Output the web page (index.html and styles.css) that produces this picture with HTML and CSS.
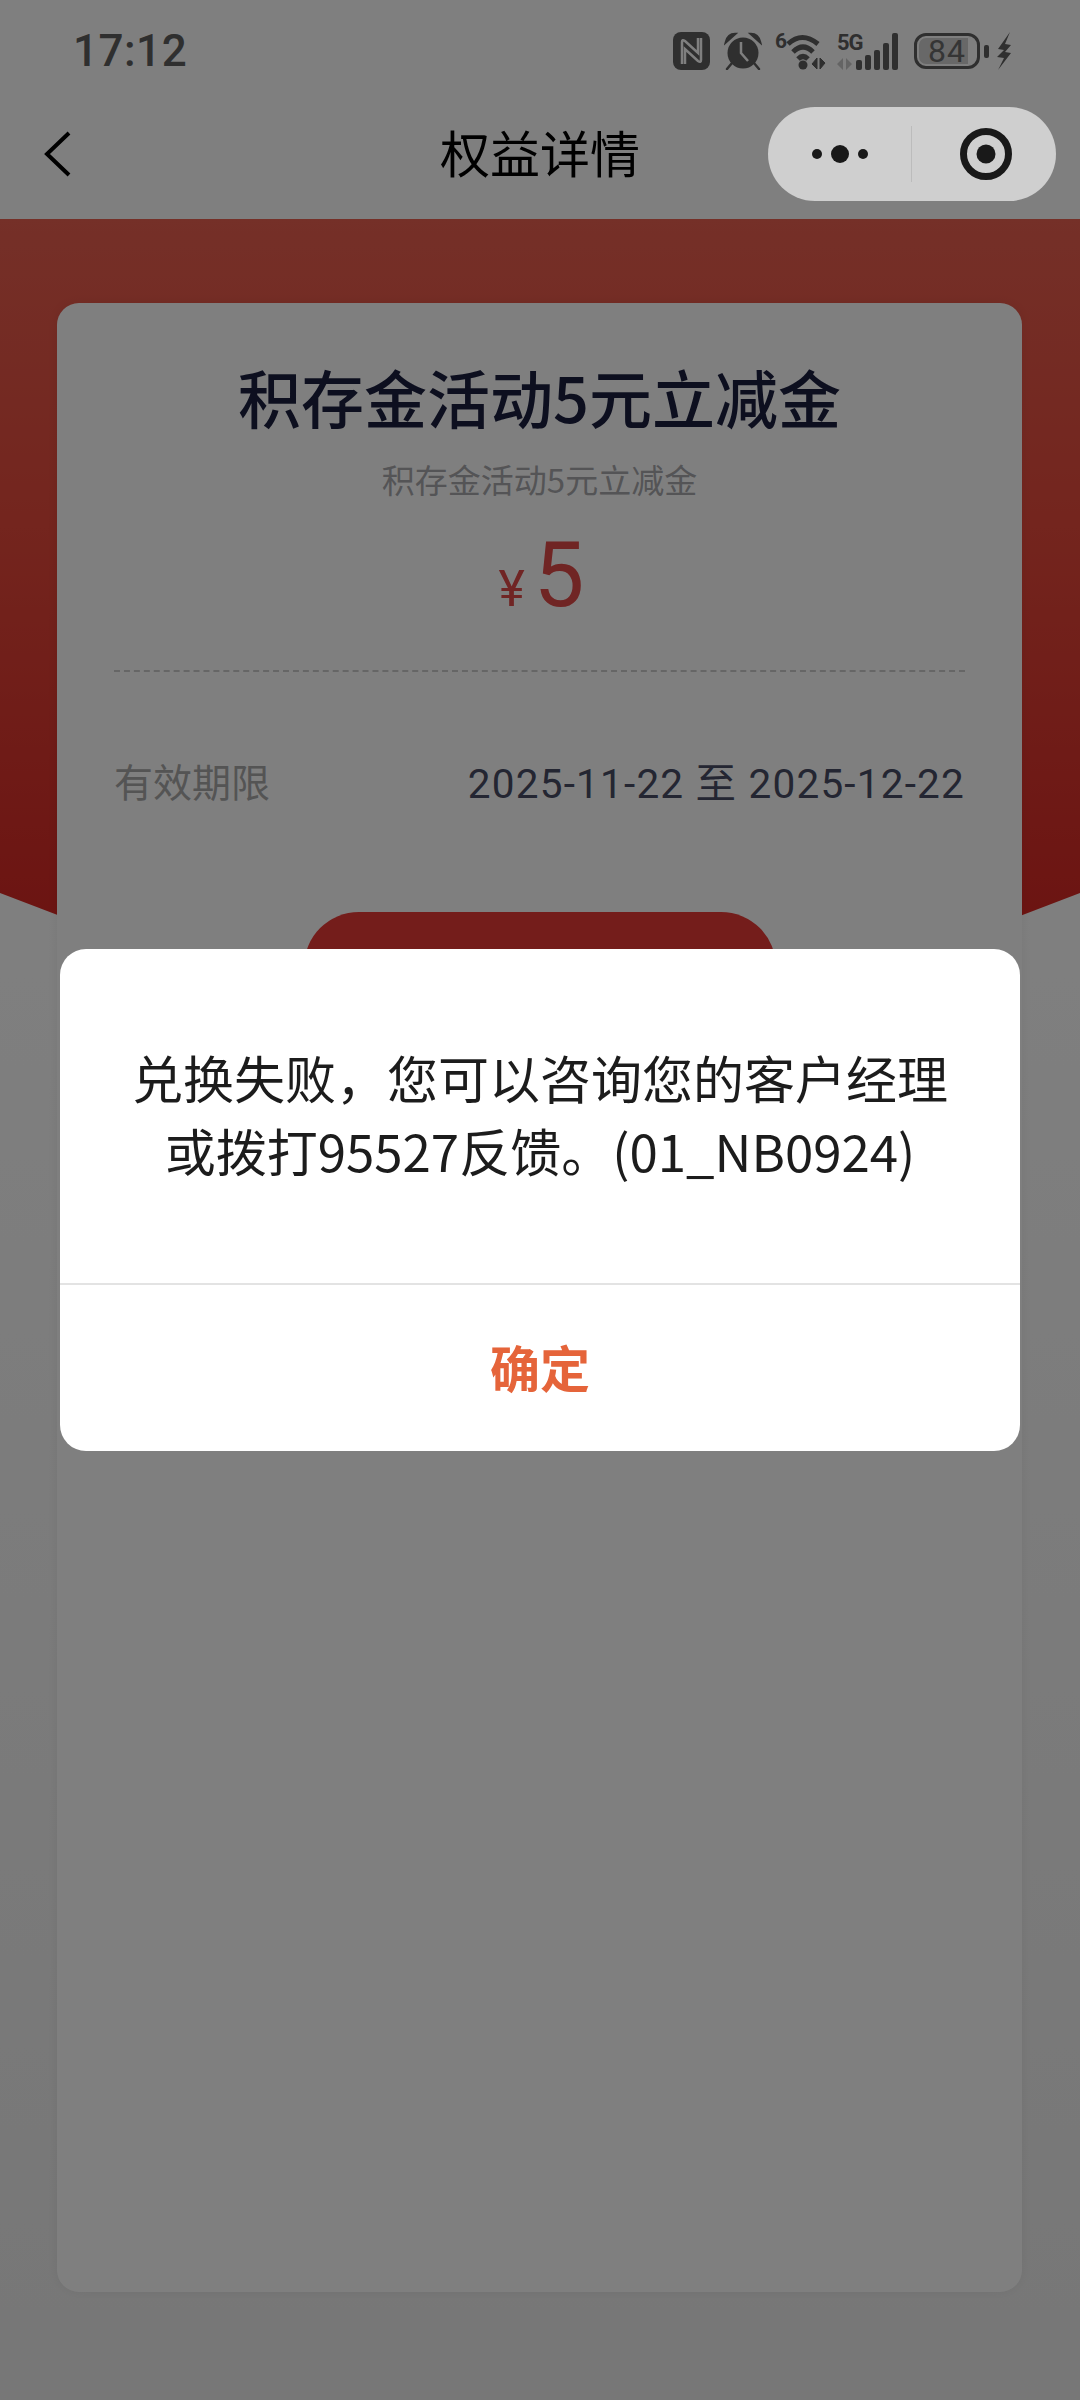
FILE: index.html
```html
<!DOCTYPE html>
<html>
<head>
    <meta charset="utf-8">
    <title>权益详情</title>
    <link rel="stylesheet" href="styles.css">
</head>
<body>
    <div class="page">
        <div class="top-bar">
            <div class="status-bar">
                <span class="status-time">17:12</span>
                <div class="status-icons">
                    <svg class="icon-nfc" width="37" height="38" viewBox="0 0 37 38">
                        <rect width="37" height="38" rx="8" fill="#5e5e5e"/>
                        <path d="M9 32V10q0-3 3-1l13 12V6M28 6v22q0 3-3 1L12 17v15" fill="none" stroke="#fff" stroke-width="2.500"/>
                    </svg>
                    <svg class="icon-alarm" width="38" height="38" viewBox="0 0 38 38">
                        <circle cx="19" cy="21" r="15.500" fill="#5e5e5e"/>
                        <path d="M2 10Q4 2 11 2ZM36 10Q34 2 27 2ZM8 31l-5 6M30 31l5 6" fill="#5e5e5e" stroke="#5e5e5e" stroke-width="2.500" stroke-linecap="round"/>
                        <path d="M17 10v11l7 8" fill="none" stroke="#fff" stroke-width="2.500"/>
                    </svg>
                    <div class="wifi">
                        <span class="wifi-gen">6</span>
                        <svg width="42" height="38" viewBox="0 0 42 38">
                            <path d="M2 12Q16-1 32 12M7 20Q17 10 27 20M12 27Q17 22 22 27" fill="none" stroke="#5e5e5e" stroke-width="5"/>
                            <circle cx="17" cy="33" r="4.500" fill="#5e5e5e"/>
                            <path d="M31 26v11l-5-5ZM34 37V26l5 5Z" fill="#5e5e5e" stroke="#5e5e5e"/>
                        </svg>
                    </div>
                    <div class="signal">
                        <div class="signal-left">
                            <span class="signal-gen">5G</span>
                            <svg width="15" height="12" viewBox="0 0 15 12">
                                <path d="M6 0v12L0 6ZM9 12V0l6 6Z" fill="#c8c8c8"/>
                            </svg>
                        </div>
                        <div class="signal-bars">
                            <i class="bar bar-1"></i>
                            <i class="bar bar-2"></i>
                            <i class="bar bar-3"></i>
                            <i class="bar bar-4"></i>
                            <i class="bar bar-5"></i>
                        </div>
                    </div>
                    <div class="battery">
                        <div class="battery-body">
                            <div class="battery-level"></div>
                            <span class="battery-text">84</span>
                        </div>
                        <i class="battery-cap"></i>
                    </div>
                    <svg class="icon-bolt" width="16" height="38" viewBox="0 0 16 38">
                        <path d="M14 0 2 17l6 1-7 7 7 1-6 12L15 21l-6-1 6-7-6-1Z" fill="#5e5e5e"/>
                    </svg>
                </div>
            </div>
            <div class="nav-bar">
                <svg class="nav-back" width="28" height="48" viewBox="0 0 28 48">
                    <path d="M25 3 3 24l22 21" fill="none" stroke="#000" stroke-width="4"/>
                </svg>
                <div class="nav-title">权益详情</div>
                <div class="capsule">
                    <div class="capsule-more">
                        <i class="dot"></i>
                        <i class="dot dot-big"></i>
                        <i class="dot"></i>
                    </div>
                    <i class="capsule-line"></i>
                    <div class="capsule-close">
                        <svg width="52" height="52" viewBox="0 0 52 52">
                            <circle cx="26" cy="26" r="22.500" fill="none" stroke="#191919" stroke-width="7"/>
                            <circle cx="26" cy="26" r="9.500" fill="#191919"/>
                        </svg>
                    </div>
                </div>
            </div>
        </div>

        <div class="hero"></div>

        <div class="card">
            <div class="card-title">积存金活动5元立减金</div>
            <div class="card-sub">积存金活动5元立减金</div>
            <div class="card-price"><span class="price-unit">¥</span><span class="price-num">5</span></div>
            <div class="card-dash"></div>
            <div class="card-row">
                <span class="row-label">有效期限</span>
                <span class="row-value">2025-11-22 至 2025-12-22</span>
            </div>
            <div class="card-btn"></div>
        </div>

        <div class="mask"></div>

        <div class="dialog">
            <div class="dialog-body">兑换失败，您可以咨询您的客户经理<br>或拨打95527反馈。(01_NB0924)</div>
            <div class="dialog-ok">确定</div>
        </div>
    </div>
</body>
</html>
```

FILE: styles.css
```css
body {
    margin: 0;
    font-family: "Noto Sans CJK SC", "Noto Sans", sans-serif;
}

.page {
    position: relative;
    width: 1080px;
    height: 2400px;
    overflow: hidden;
    background: linear-gradient(180deg, #fff 37%, #eeeeee 100%);
}

i {
    display: block;
}

/* top */
.top-bar {
    height: 219px;
    background-color: #fff;
}

.status-bar {
    height: 88px;
    padding: 14px 68px 0 73px;
    box-sizing: border-box;
    display: flex;
    align-items: center;
    justify-content: space-between;
}

.status-time {
    font-family: Roboto, sans-serif;
    font-size: 44px;
    font-weight: 500;
    letter-spacing: 0.5px;
    color: #5e5e5e;
}

.status-icons {
    display: flex;
    align-items: center;
}

.icon-alarm {
    margin-left: 14px;
}

.wifi {
    display: flex;
    align-items: flex-start;
    height: 38px;
    margin-left: 13px;
}

.wifi-gen {
    width: 11px;
    font-family: Roboto, sans-serif;
    font-size: 21px;
    font-weight: 700;
    line-height: 18px;
    color: #5e5e5e;
}

.signal {
    display: flex;
    align-items: flex-end;
    height: 38px;
    margin-left: 9px;
    position: relative;
}

.signal-left {
    width: 19px;
    height: 38px;
    display: flex;
    flex-direction: column;
    justify-content: space-between;
    white-space: nowrap;
}

.signal-gen {
    font-family: Roboto, sans-serif;
    font-size: 22px;
    font-weight: 700;
    letter-spacing: -1px;
    line-height: 22px;
    color: #5e5e5e;
}

.signal-bars {
    display: flex;
    align-items: flex-end;
    gap: 3px;
    height: 37px;
}

.bar {
    width: 6px;
    border-radius: 2px;
    background-color: #5e5e5e;
}

.bar-1 { height: 10px; }
.bar-2 { height: 15px; }
.bar-3 { height: 20px; }
.bar-4 { height: 27px; }
.bar-5 { height: 37px; }

.battery {
    display: flex;
    align-items: center;
    margin-left: 16px;
}

.battery-body {
    position: relative;
    width: 66px;
    height: 36px;
    box-sizing: border-box;
    border: 3px solid #5e5e5e;
    border-radius: 12px;
    display: flex;
    align-items: center;
    justify-content: center;
    overflow: hidden;
}

.battery-level {
    position: absolute;
    left: 2px;
    top: 2px;
    bottom: 2px;
    width: 49px;
    border-radius: 7px 0 0 7px;
    background-color: #d0d0d0;
}

.battery-text {
    position: relative;
    font-family: Roboto, sans-serif;
    font-size: 32px;
    line-height: 30px;
    letter-spacing: 1px;
    color: #6a6a6a;
}

.battery-cap {
    width: 5px;
    height: 13px;
    margin-left: 4px;
    border-radius: 2px;
    background-color: #5e5e5e;
}

.icon-bolt {
    margin-left: 7px;
}

.nav-bar {
    position: relative;
    height: 131px;
    display: flex;
    align-items: center;
    justify-content: center;
}

.nav-back {
    position: absolute;
    left: 44px;
    top: 42px;
}

.nav-title {
    font-size: 50px;
    padding-bottom: 6px;
    color: #000;
}

.capsule {
    position: absolute;
    right: 24px;
    top: 19px;
    z-index: 3;
    width: 288px;
    height: 94px;
    border-radius: 47px;
    background-color: #cfcfcf;
    display: flex;
    align-items: center;
}

.capsule-more {
    width: 143px;
    padding-left: 1px;
    box-sizing: border-box;
    display: flex;
    align-items: center;
    justify-content: center;
    gap: 9px;
}

.dot {
    width: 10px;
    height: 10px;
    border-radius: 50%;
    background-color: #191919;
}

.dot-big {
    width: 18px;
    height: 18px;
}

.capsule-line {
    width: 1px;
    height: 56px;
    background-color: #bcbcbc;
}

.capsule-close {
    flex: 1;
    display: flex;
    justify-content: center;
    padding-left: 4px;
}

/* red band + card */
.hero {
    height: 880px;
    background: linear-gradient(180deg, #ea6050 0%, #e84a3c 35%, #d82824 80%);
    clip-path: polygon(0 0, 100% 0, 100% 674px, 50% 880px, 0 674px);
}

.card {
    position: relative;
    width: 965px;
    height: 1989px;
    margin: -796px 0 0 57px;
    box-sizing: border-box;
    padding: 45px 57px 0;
    border-radius: 22px;
    background-color: #fff;
    box-shadow: 0 0 12px rgba(0, 0, 0, 0.06);
    display: flex;
    flex-direction: column;
}

.card-title {
    font-size: 63px;
    font-weight: 500;
    line-height: 96px;
    text-align: center;
    color: #1a1e3e;
}

.card-sub {
    font-size: 33px;
    line-height: 50px;
    margin-top: 10px;
    text-align: center;
    color: #a8a8ac;
}

.card-price {
    display: flex;
    justify-content: center;
    align-items: baseline;
    gap: 9px;
    height: 112px;
    margin-top: 16px;
    padding-left: 4px;
    font-family: Roboto, sans-serif;
    color: #e04a48;
}

.price-unit {
    font-size: 50px;
}

.price-num {
    font-size: 90px;
    line-height: 112px;
}

.card-dash {
    margin-top: 38px;
    border-top: 2px dashed #cccccc;
}

.card-row {
    display: flex;
    justify-content: space-between;
    align-items: center;
    margin-top: 76px;
    height: 64px;
    font-size: 39px;
}

.row-label {
    color: #a8a8a8;
}

.row-value {
    font-family: Roboto, "Noto Sans CJK SC", sans-serif;
    font-size: 40.500px;
    letter-spacing: 1.200px;
    color: #484c64;
}

.card-btn {
    width: 472px;
    height: 110px;
    margin: 100px auto 0;
    border-radius: 55px;
    background-color: #e83a36;
}

/* dialog */
.mask {
    position: absolute;
    left: 0;
    top: 0;
    right: 0;
    bottom: 0;
    z-index: 2;
    background-color: rgba(0, 0, 0, 0.5);
}

.dialog {
    position: absolute;
    left: 60px;
    top: 949px;
    z-index: 4;
    width: 960px;
    height: 502px;
    border-radius: 26px;
    background-color: #fff;
    display: flex;
    flex-direction: column;
}

.dialog-body {
    height: 336px;
    box-sizing: border-box;
    padding-top: 92px;
    border-bottom: 2px solid #e3e3e3;
    font-size: 51px;
    line-height: 73px;
    text-align: center;
    color: #1c1c1c;
}

.dialog-ok {
    flex: 1;
    display: flex;
    align-items: center;
    justify-content: center;
    padding-bottom: 4px;
    font-size: 50px;
    font-weight: 700;
    color: #e5643a;
}
```
